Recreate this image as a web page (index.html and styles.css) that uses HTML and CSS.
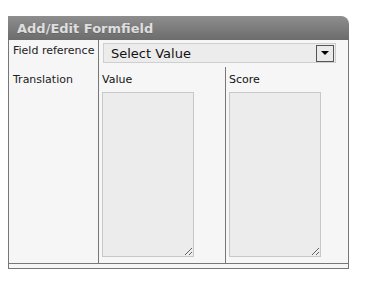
FILE: index.html
```html
<html>
  <head>
    <title>Add/Edit Formfield</title>
    <link rel="stylesheet" href="styles.css">
  </head>
  <body>
    <div class="panel">
      <div class="panel-head">Add/Edit Formfield</div>
      <div class="panel-body">
        <div class="label">Field reference</div>
        <div class="field wide">
          <div class="select">
            <span class="select-text">Select Value</span>
            <span class="select-btn"><span class="arrow"></span></span>
          </div>
        </div>

        <div class="label second">Translation</div>
        <div class="field col">
          <div class="col-title">Value</div>
          <textarea class="box"></textarea>
        </div>
        <div class="field col last">
          <div class="col-title">Score</div>
          <textarea class="box"></textarea>
        </div>
      </div>
      <div class="panel-foot"></div>
    </div>
  </body>
</html>
```
FILE: styles.css
```css
body {
    margin: 16px 0 0 8px;
    background: #fff;
    font-family: "DejaVu Sans", Verdana, sans-serif;
}

.panel {
    width: 341px;
}

.panel-head {
    height: 24px;
    line-height: 25px;
    padding-left: 9px;
    background: linear-gradient(#8e8e8e, #6c6c6c);
    border-radius: 0 8px 0 0;
    color: #dedede;
    font-weight: bold;
    font-size: 13px;
    text-shadow: 0 1px 0 #666;
}

.panel-body {
    display: grid;
    grid-template-columns: 90px 127px 1fr;
    background: #f6f6f6;
    border-left: 1px solid #777;
    border-right: 1px solid #777;
}

.label {
    border-right: 1px solid #777;
    padding: 4px 0 0 4px;
    font-size: 11px;
    color: #222;
}
.label.second {
    padding-top: 6px;
}

.field {
    padding-left: 3px;
}
.field.wide {
    grid-column: span 2;
    padding: 3px 12px 4px 4px;
}

.select {
    display: flex;
    align-items: center;
    height: 18px;
    border: 1px solid #cfcfcf;
    background: #ececec;
}
.select-text {
    flex: 1;
    padding: 1px 0 0 7px;
    font-size: 13px;
    color: #111;
}
.select-btn {
    width: 16px;
    height: 15px;
    margin-right: 1px;
    border: 1px solid #555;
    background: #eaeaea;
    display: flex;
    align-items: center;
    justify-content: center;
}
.arrow {
    width: 0;
    height: 0;
    border-left: 4px solid transparent;
    border-right: 4px solid transparent;
    border-top: 4px solid #000;
}

.col {
    padding-top: 6px;
}
.col:not(.last) {
    border-right: 1px solid #777;
}
.col-title {
    font-size: 11px;
    color: #111;
    margin-bottom: 6px;
}

.box {
    display: block;
    width: 92px;
    height: 165px;
    margin: 0 0 6px 0;
    padding: 0;
    border: 1px solid #c8c8c8;
    background: #ececec;
    resize: both;
    outline: none;
}

.panel-foot {
    height: 4px;
    background: #f6f6f6;
    border: 1px solid #777;
}
```
